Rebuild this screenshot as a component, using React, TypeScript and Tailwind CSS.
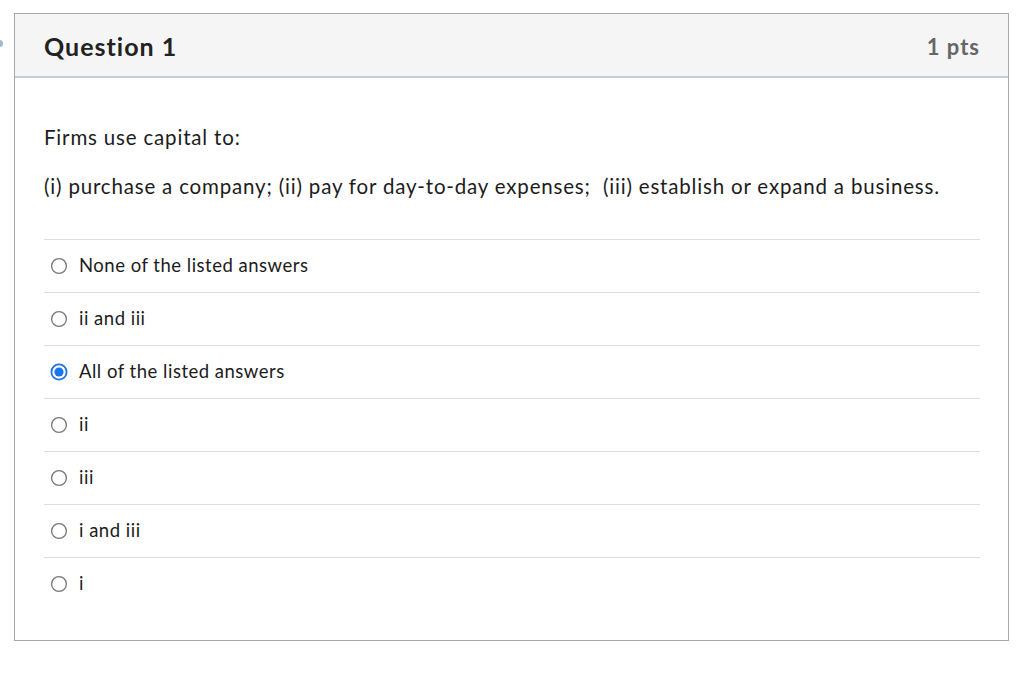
import React from "react";

const options = [
  { label: "None of the listed answers", checked: false },
  { label: "ii and iii", checked: false },
  { label: "All of the listed answers", checked: true },
  { label: "ii", checked: false },
  { label: "iii", checked: false },
  { label: "i and iii", checked: false },
  { label: "i", checked: false },
];

function Radio({ checked }: { checked: boolean }) {
  return checked ? (
    <svg width="18" height="18" viewBox="0 0 18 18" className="shrink-0">
      <circle cx="9" cy="9" r="7.6" fill="white" stroke="#1a73e8" strokeWidth="1.8" />
      <circle cx="9" cy="9" r="4.6" fill="#1a73e8" />
    </svg>
  ) : (
    <svg width="18" height="18" viewBox="0 0 18 18" className="shrink-0">
      <circle cx="9" cy="9" r="7.4" fill="white" stroke="#767676" strokeWidth="1.3" />
    </svg>
  );
}

export default function App() {
  return (
    <div className="relative w-[1024px] h-[688px] bg-white overflow-hidden" style={{ fontFamily: "Lato, 'Noto Sans', sans-serif" }}>
      <div className="absolute left-[-4px] top-[40px] w-[7px] h-[7px] rounded-full bg-[#9fb8cf]" />
      <div className="pt-[13px] pl-[14px]">
        <div className="w-[995px] h-[628px] border border-[#a9a9a9] flex flex-col">
          <div className="h-[64px] bg-[#f5f5f5] border-b-2 border-[#c7cdd1] flex items-center justify-between pl-[29px] pr-[28px] pt-[3px]">
            <span className="text-[25px] font-bold text-[#222222] tracking-[1px]">Question 1</span>
            <span className="text-[22px] font-bold text-[#666666] tracking-[1px]">1 pts</span>
          </div>
          <div className="pl-[29px] pr-[28px] pt-[45px]">
            <p className="text-[20.5px] text-[#1c1c1c] leading-[28px] tracking-[0.82px]">Firms use capital to:</p>
            <p className="text-[20.5px] text-[#1c1c1c] leading-[28px] tracking-[0.82px] mt-[21px]">
              (i) purchase a company; (ii) pay for day-to-day expenses;&nbsp; (iii) establish or expand a business.
            </p>
            <div className="mt-[39px]">
              {options.map((o, i) => (
                <div
                  key={i}
                  className="h-[53px] flex items-center gap-[11px] pl-[6px] border-t border-[#dddddd]"
                >
                  <Radio checked={o.checked} />
                  <span className="text-[18.5px] text-[#1c1c1c] tracking-[0.5px]">{o.label}</span>
                </div>
              ))}
            </div>
          </div>
        </div>
      </div>
    </div>
  );
}
